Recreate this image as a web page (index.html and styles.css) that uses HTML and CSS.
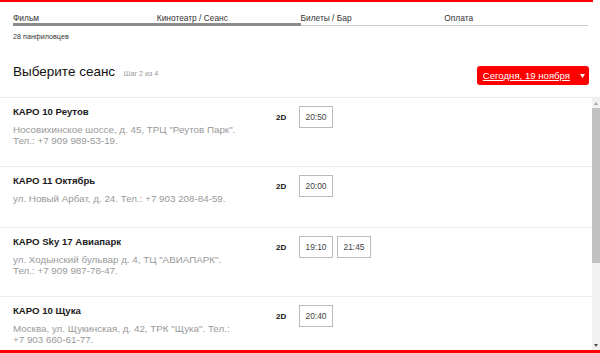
FILE: index.html
```html
<!DOCTYPE html>
<html>
<head>
    <meta charset="utf-8" />
    <title>Выберите сеанс</title>
    <link rel="stylesheet" href="styles.css">
</head>
<body>
    <div class="topline"></div>

    <ul class="steps">
        <li class="done">Фильм</li>
        <li class="done">Кинотеатр / Сеанс</li>
        <li>Билеты / Бар</li>
        <li>Оплата</li>
    </ul>

    <div class="film">28 панфиловцев</div>

    <div class="head">
        <h1>Выберите сеанс <small>Шаг 2 из 4</small></h1>
        <a class="date" href="#">
            <span>Сегодня, 19 ноября</span>
            <svg width="5" height="4" viewBox="0 0 5 4"><path d="M0 0h5L2.5 4z" fill="#fff"/></svg>
        </a>
    </div>

    <div class="panel">
        <div class="list">
            <div class="row">
                <div class="info">
                    <div class="name">КАРО 10 Реутов</div>
                    <div class="addr">Носовихинское шоссе, д. 45, ТРЦ "Реутов Парк". Тел.: +7 909 989-53-19.</div>
                </div>
                <div class="slot">
                    <span class="format">2D</span>
                    <a class="time" href="#">20:50</a>
                </div>
            </div>
            <div class="row">
                <div class="info">
                    <div class="name">КАРО 11 Октябрь</div>
                    <div class="addr">ул. Новый Арбат, д. 24. Тел.: +7 903 208-84-59.</div>
                </div>
                <div class="slot">
                    <span class="format">2D</span>
                    <a class="time" href="#">20:00</a>
                </div>
            </div>
            <div class="row">
                <div class="info">
                    <div class="name">КАРО Sky 17 Авиапарк</div>
                    <div class="addr">ул. Ходынский бульвар д. 4, ТЦ "АВИАПАРК". Тел.: +7 909 987-78-47.</div>
                </div>
                <div class="slot">
                    <span class="format">2D</span>
                    <a class="time" href="#">19:10</a>
                    <a class="time" href="#">21:45</a>
                </div>
            </div>
            <div class="row">
                <div class="info">
                    <div class="name">КАРО 10 Щука</div>
                    <div class="addr">Москва, ул. Щукинская, д. 42, ТРК "Щука". Тел.: +7 903 660-61-77.</div>
                </div>
                <div class="slot">
                    <span class="format">2D</span>
                    <a class="time" href="#">20:40</a>
                </div>
            </div>
        </div>

        <!-- drawn scrollbar, the list itself does not scroll in the shot -->
        <div class="scrollbar">
            <div class="arrow">
                <svg width="4" height="3" viewBox="0 0 4 3"><path d="M0 3h4L2 0z" fill="#a3a3a3"/></svg>
            </div>
            <div class="thumb"></div>
            <div class="track"></div>
            <div class="arrow">
                <svg width="4" height="3" viewBox="0 0 4 3"><path d="M0 0h4L2 3z" fill="#505050"/></svg>
            </div>
        </div>
    </div>

    <div class="bottomline"></div>
</body>
</html>
```

FILE: styles.css
```css
html, body {
    margin: 0;
    padding: 0;
}
body {
    height: 353px;
    display: flex;
    flex-direction: column;
    overflow: hidden;
    background: #fff;
    font-family: "Liberation Sans", Arial, sans-serif;
    color: #333;
}
.topline {
    height: 2px;
    margin-right: 7px;
    background: #f00;
}
.bottomline {
    height: 3px;
    background: #f00;
}
.steps {
    display: flex;
    align-items: flex-end;
    margin: 11px 12px 0 13px;
    padding: 0;
    list-style: none;
}
.steps li {
    flex: 1;
    font-size: 8.4px;
    line-height: 10px;
    color: #333;
    padding-bottom: 2px;
    border-bottom: 1px solid #ccc;
}
.steps li.done {
    padding-bottom: 0;
    border-bottom: 3px solid #8c8c8c;
}
.film {
    margin: 6px 13px 0;
    font-size: 7.2px;
    line-height: 9px;
    color: #333;
}
.head {
    display: flex;
    align-items: flex-start;
    margin: 23px 11px 0 13px;
}
h1 {
    margin: 0;
    font-size: 13.5px;
    line-height: 16px;
    font-weight: normal;
    color: #111;
}
h1 small {
    margin-left: 5px;
    font-size: 7.2px;
    color: #999;
}
.date {
    display: flex;
    align-items: center;
    margin: 2px 0 0 auto;
    height: 19px;
    padding: 0 4px 0 6px;
    background: #f00;
    border-radius: 3px;
    color: #fff;
    font-size: 9.6px;
}
.date svg {
    margin-left: 10px;
    margin-top: 1px;
}
.panel {
    flex: 1;
    min-height: 0;
    display: flex;
    margin-top: 12px;
    border-top: 1px solid #ececec;
}
.list {
    flex: 1;
    overflow: hidden;
}
.scrollbar {
    width: 8px;
    display: flex;
    flex-direction: column;
    background: #f1f1f1;
}
.arrow {
    height: 10px;
    display: flex;
    align-items: center;
    justify-content: center;
}
.thumb {
    height: 155px;
    background: #c1c1c1;
}
.track {
    flex: 1;
}
.row {
    display: flex;
    align-items: flex-start;
    box-sizing: border-box;
    min-height: 61px;
    padding: 8px 13px 20px;
    border-bottom: 1px solid #ececec;
}
.info {
    flex: 0 0 225px;
}
.name {
    font-size: 9.6px;
    line-height: 11px;
    font-weight: bold;
    color: #1a1a1a;
}
.addr {
    margin-top: 7px;
    font-size: 9.8px;
    line-height: 11px;
    color: #999;
}
.slot {
    display: flex;
    align-items: center;
    gap: 4px;
    margin-left: 38px;
}
.format {
    width: 19px;
    font-size: 8px;
    font-weight: bold;
    color: #111;
}
.time {
    box-sizing: border-box;
    width: 34px;
    height: 22px;
    line-height: 20px;
    border: 1px solid #bbb;
    text-align: center;
    font-size: 8.4px;
    color: #444;
    text-decoration: none;
}
```
